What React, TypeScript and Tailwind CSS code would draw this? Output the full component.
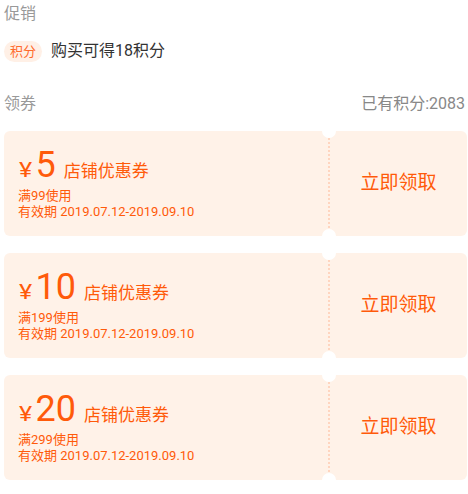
const coupons = [
  { amount: '5', limit: '满99使用' },
  { amount: '10', limit: '满199使用' },
  { amount: '20', limit: '满299使用' },
];

function Coupon({ amount, limit }: { amount: string; limit: string }) {
  return (
    <div className="flex h-[105px] rounded-[6px] bg-[#fff2e8]">
      <div className="flex w-[324px] flex-col justify-center pl-[14px] text-[#ff5a0a]">
        <div className="flex items-baseline leading-none">
          <span className="mr-[5px] inline-block scale-x-125 pl-[2px] text-[20px]">¥</span>
          <span className="text-[36px]">{amount}</span>
          <span className="ml-[8px] text-[17px]">店铺优惠券</span>
        </div>
        <div className="mt-[5px] text-[13px] leading-[15px]">{limit}</div>
        <div className="text-[13px] leading-[17px]">有效期 2019.07.12-2019.09.10</div>
      </div>
      <div className="relative flex flex-1 items-center justify-center border-l-2 border-dotted border-[#ffd5bf]">
        <div className="absolute -left-[8px] -top-[7px] h-[14px] w-[14px] rounded-full bg-white" />
        <div className="absolute -bottom-[7px] -left-[8px] h-[14px] w-[14px] rounded-full bg-white" />
        <span className="text-[19px] text-[#ff5a0a]">立即领取</span>
      </div>
    </div>
  );
}

export default function App() {
  return (
    <div
      className="h-[494px] w-[468px] bg-white px-1"
      style={{ fontFamily: "Roboto, 'Noto Sans CJK SC', sans-serif" }}
    >
      <div className="h-[28px] text-[16px] leading-[28px] text-[#999]">促销</div>
      <div className="mt-[12px] flex h-[22px] items-center">
        <span className="rounded-full bg-[#fff0e6] px-[6px] text-[13px] leading-[21px] text-[#ff6a2a]">积分</span>
        <span className="ml-[9px] text-[16px] text-[#333]">购买可得18积分</span>
      </div>
      <div className="mt-[30px] flex h-[24px] items-center justify-between text-[16px] text-[#999]">
        <span>领券</span>
        <span className="mr-[-1px] text-[#888]">已有积分:2083</span>
      </div>
      <div className="-mr-[3px] mt-[15px] flex flex-col gap-[17px]">
        {coupons.map((c) => (
          <Coupon key={c.amount} {...c} />
        ))}
      </div>
    </div>
  );
}
